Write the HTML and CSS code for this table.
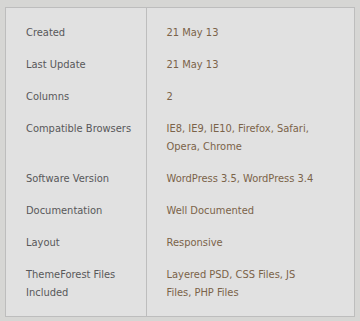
FILE: index.html
```html
<!DOCTYPE html>
<html>
<head>
<meta charset="utf-8">
<link rel="stylesheet" href="styles.css">
</head>
<body>
<div class="panel">
  <table class="specs">
    <colgroup><col class="label-col"><col></colgroup>
    <tr><th>Created</th><td>21 May 13</td></tr>
    <tr><th>Last Update</th><td>21 May 13</td></tr>
    <tr><th>Columns</th><td>2</td></tr>
    <tr><th>Compatible Browsers</th><td>IE8, IE9, IE10, Firefox, Safari, Opera, Chrome</td></tr>
    <tr><th>Software Version</th><td>WordPress 3.5, WordPress 3.4</td></tr>
    <tr><th>Documentation</th><td>Well Documented</td></tr>
    <tr><th>Layout</th><td>Responsive</td></tr>
    <tr><th>ThemeForest Files Included</th><td>Layered PSD, CSS Files, JS Files, PHP Files</td></tr>
  </table>
</div>
</body>
</html>
```

FILE: styles.css
```css
html, body {
  margin: 0;
  background: #d6d6d4;
}
body {
  padding: 7px 5px 5px 5px;
  font-family: "DejaVu Sans Condensed", "DejaVu Sans", sans-serif;
  font-size: 11px;
  line-height: 18px;
}
.panel {
  width: 350px;
  box-sizing: border-box;
  height: 310px;
  border: 1px solid #bdbdbd;
  background: #e1e1e1;
}
.specs {
  border-collapse: collapse;
  table-layout: fixed;
  width: 100%;
  height: 100%;
}
.label-col {
  width: 140px;
}
.specs th, .specs td {
  padding: 7px 20px;
  text-align: left;
  vertical-align: top;
  font-weight: normal;
}
.specs tr:first-child th, .specs tr:first-child td {
  padding-top: 16px;
}
.specs tr:last-child th, .specs tr:last-child td {
  padding-bottom: 14px;
}
.specs th {
  border-right: 1px solid #bdbdbd;
  color: #58585a;
  white-space: nowrap;
}
.specs tr:last-child th {
  white-space: normal;
}
.specs td {
  padding-right: 36px;
  color: #7b6349;
}
```
